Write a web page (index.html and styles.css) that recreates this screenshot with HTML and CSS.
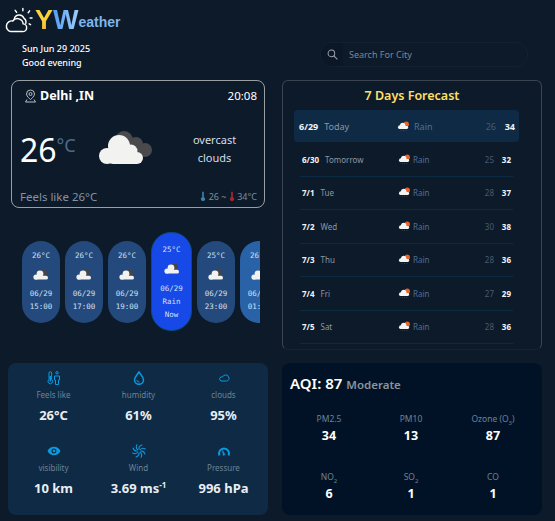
FILE: index.html
```html
<!DOCTYPE html>
<html lang="en">
<head>
  <meta charset="UTF-8">
  <title>YWeather</title>
  <link rel="stylesheet" href="styles.css">
</head>
<body>
  <svg class="defs" width="0" height="0">
    <symbol id="overcast" viewBox="0 0 56 36">
      <g fill="#4a4a4c">
        <circle cx="26" cy="10" r="9"/>
        <circle cx="38" cy="14" r="7"/>
        <circle cx="47" cy="20" r="7"/>
        <rect x="26" y="14" width="20" height="12"/>
      </g>
      <g fill="#f2f2f0">
        <circle cx="21" cy="16" r="11"/>
        <circle cx="33" cy="21" r="6.5"/>
        <circle cx="9" cy="26" r="8"/>
        <rect x="9" y="22" width="36" height="12" rx="6"/>
      </g>
    </symbol>
    <symbol id="rainy" viewBox="0 0 16 14">
      <circle cx="11.5" cy="4" r="3.4" fill="#e8622c"/>
      <g fill="#f4f4f2">
        <circle cx="7" cy="5.5" r="3.4"/>
        <circle cx="3.4" cy="7.8" r="2.4"/>
        <rect x="2" y="6.5" width="12" height="3.6" rx="1.8"/>
      </g>
      <path d="M5 11.5v1.2M8 11.5v1.2M11 11.5v1.2" stroke="#4a5866" stroke-width=".8"/>
    </symbol>
    <symbol id="hourly" viewBox="0 0 16 12">
      <circle cx="10.5" cy="4" r="3.4" fill="#454547"/>
      <g fill="#f2f2f0">
        <circle cx="7" cy="4.8" r="3.4"/>
        <circle cx="3" cy="8" r="2.6"/>
        <rect x="1" y="6.8" width="14" height="3.8" rx="1.9"/>
      </g>
    </symbol>
    <symbol id="blade" viewBox="0 0 14 14">
      <path d="M7 5.200C6.800 3.600 7.800 1.800 10 1.100" fill="none" stroke="#0a9ae0" stroke-width="1.100" stroke-linecap="round"/>
    </symbol>
  </svg>

  <header class="top">
    <div class="brand">
      <div class="logo">
        <svg class="logo-icon" viewBox="2 0 30 28" fill="none" stroke="#fff" stroke-width="1.500" stroke-linecap="round">
          <path d="M8 25.500h12a4 4 0 0 0 .8-8A6 6 0 0 0 10 14.500a5.500 5.500 0 0 0-2 11z"/>
          <path d="M11.500 13a5.200 5.200 0 0 1 10-1.500 5 5 0 0 1 2 5.500"/>
          <path d="M20.500 1.500v2.500M12.500 3.500l1.500 2M27.500 4l-1.500 2M28 11.500h2M27 17.500l1.500.8"/>
        </svg>
        <span class="logo-y">Y</span><span class="logo-w">W</span><span class="logo-rest">eather</span>
      </div>
      <p class="date">Sun Jun 29 2025</p>
      <p class="date">Good evening</p>
    </div>
    <div class="search">
      <span class="search-icon">
        <svg width="11" height="11" viewBox="0 0 12 12" fill="none" stroke="#9aa4ae" stroke-width="1.100">
          <circle cx="4.800" cy="4.800" r="3.600"/>
          <path d="M7.500 7.500l3.800 3.800"/>
        </svg>
      </span>
      <span class="search-text">Search For City</span>
    </div>
  </header>

  <main class="layout">
    <div class="left">
      <section class="now">
        <div class="now-head">
          <div class="place">
            <svg width="13" height="14" viewBox="0 0 13 14" fill="none" stroke="#b8bec4" stroke-width="1">
              <path d="M6.500 1a4 4 0 0 0-4 4c0 2.500 4 5.500 4 5.500s4-3 4-5.500a4 4 0 0 0-4-4z"/>
              <circle cx="6.500" cy="5" r="1.500"/>
              <path d="M3 10.500l-1.500 2.500h10L10 10.500"/>
            </svg>
            <span>Delhi ,IN</span>
          </div>
          <span class="clock">20:08</span>
        </div>
        <div class="now-main">
          <div class="temp">26<span class="temp-unit">°C</span></div>
          <svg class="now-cloud" viewBox="0 0 56 36"><use href="#overcast"/></svg>
          <div class="desc">overcast<br>clouds</div>
        </div>
        <div class="now-foot">
          <span class="feels">Feels like 26°C</span>
          <span class="range">
            <svg class="thermo" viewBox="0 0 6 12"><path d="M2 1h2v6.500a2.400 2.400 0 1 1-2 0z" fill="#3f7fa8"/></svg> 26 ~
            <svg class="thermo" viewBox="0 0 6 12"><path d="M2 1h2v6.500a2.400 2.400 0 1 1-2 0z" fill="#a8282c"/></svg> 34°C
          </span>
        </div>
      </section>

      <section class="hours">
        <div class="pill"><span>26°C</span><svg viewBox="0 0 16 12"><use href="#hourly"/></svg><span>06/29</span><span>15:00</span></div>
        <div class="pill"><span>26°C</span><svg viewBox="0 0 16 12"><use href="#hourly"/></svg><span>06/29</span><span>17:00</span></div>
        <div class="pill"><span>26°C</span><svg viewBox="0 0 16 12"><use href="#hourly"/></svg><span>06/29</span><span>19:00</span></div>
        <div class="pill pill-now"><span>25°C</span><svg viewBox="0 0 16 12"><use href="#hourly"/></svg><span>06/29</span><span>Rain</span><span>Now</span></div>
        <div class="pill"><span>25°C</span><svg viewBox="0 0 16 12"><use href="#hourly"/></svg><span>06/29</span><span>23:00</span></div>
        <div class="pill pill-next"><span>26°C</span><svg viewBox="0 0 16 12"><use href="#hourly"/></svg><span>06/30</span><span>01:00</span></div>
      </section>
    </div>

    <section class="week">
      <h2 class="week-title">7 Days Forecast</h2>
      <div class="day day-today">
        <span class="day-name"><b>6/29</b>Today</span>
        <svg class="day-icon" viewBox="0 0 16 14"><use href="#rainy"/></svg>
        <span class="day-rain">Rain</span><span class="low">26</span><b class="high">34</b>
      </div>
      <div class="day">
        <span class="day-name"><b>6/30</b>Tomorrow</span>
        <svg class="day-icon" viewBox="0 0 16 14"><use href="#rainy"/></svg>
        <span class="day-rain">Rain</span><span class="low">25</span><b class="high">32</b>
      </div>
      <div class="day">
        <span class="day-name"><b>7/1</b>Tue</span>
        <svg class="day-icon" viewBox="0 0 16 14"><use href="#rainy"/></svg>
        <span class="day-rain">Rain</span><span class="low">28</span><b class="high">37</b>
      </div>
      <div class="day">
        <span class="day-name"><b>7/2</b>Wed</span>
        <svg class="day-icon" viewBox="0 0 16 14"><use href="#rainy"/></svg>
        <span class="day-rain">Rain</span><span class="low">30</span><b class="high">38</b>
      </div>
      <div class="day">
        <span class="day-name"><b>7/3</b>Thu</span>
        <svg class="day-icon" viewBox="0 0 16 14"><use href="#rainy"/></svg>
        <span class="day-rain">Rain</span><span class="low">28</span><b class="high">36</b>
      </div>
      <div class="day">
        <span class="day-name"><b>7/4</b>Fri</span>
        <svg class="day-icon" viewBox="0 0 16 14"><use href="#rainy"/></svg>
        <span class="day-rain">Rain</span><span class="low">27</span><b class="high">29</b>
      </div>
      <div class="day">
        <span class="day-name"><b>7/5</b>Sat</span>
        <svg class="day-icon" viewBox="0 0 16 14"><use href="#rainy"/></svg>
        <span class="day-rain">Rain</span><span class="low">28</span><b class="high">36</b>
      </div>
    </section>

    <section class="stats">
      <div class="stat">
        <svg viewBox="0 0 14 14" fill="none" stroke="#0a9ae0" stroke-width="1">
          <path d="M2 2a1.300 1.300 0 0 1 2.600 0v6.500a2.300 2.300 0 1 1-2.600 0z"/>
          <path d="M3.300 5v5.500" stroke-width="1.400"/>
          <circle cx="10" cy="1.800" r="1.200"/>
          <path d="M7.500 5h5v4h-1v4.500h-3V9h-1z"/>
        </svg>
        <span class="stat-label">Feels like</span>
        <b class="stat-value">26°C</b>
      </div>
      <div class="stat">
        <svg viewBox="0 0 14 14" fill="none" stroke="#0a9ae0" stroke-width="1.500">
          <path d="M7 1C5 4 2.500 6 2.500 8.800a4.500 4.500 0 0 0 9 0C11.500 6 9 4 7 1z"/>
          <path d="M4.800 8.800A2.400 2.400 0 0 0 7.500 11" stroke-width="1"/>
        </svg>
        <span class="stat-label">humidity</span>
        <b class="stat-value">61%</b>
      </div>
      <div class="stat">
        <svg viewBox="0 0 14 14" fill="none" stroke="#0a9ae0" stroke-width="1">
          <path d="M4 10h5.500a2.500 2.500 0 0 0 2-4A2.500 2.500 0 0 0 8.500 4a3.200 3.200 0 0 0-3 2A2 2 0 0 0 4 10z"/>
        </svg>
        <span class="stat-label">clouds</span>
        <b class="stat-value">95%</b>
      </div>
      <div class="stat">
        <svg viewBox="0 0 14 14">
          <path fill="#0a9ae0" fill-rule="evenodd" d="M0.500 7C2 4 4.300 2.700 7 2.700S12 4 13.500 7C12 10 9.700 11.300 7 11.300S2 10 0.500 7zM7 4.500a2.500 2.500 0 1 0 0 5a2.500 2.500 0 0 0 0-5z"/>
          <circle cx="7" cy="7" r="1.300" fill="#0a9ae0"/>
        </svg>
        <span class="stat-label">visibility</span>
        <b class="stat-value">10 km</b>
      </div>
      <div class="stat">
        <svg viewBox="0 0 14 14">
          <use href="#blade"/>
          <use href="#blade" transform="rotate(45 7 7)"/>
          <use href="#blade" transform="rotate(90 7 7)"/>
          <use href="#blade" transform="rotate(135 7 7)"/>
          <use href="#blade" transform="rotate(180 7 7)"/>
          <use href="#blade" transform="rotate(225 7 7)"/>
          <use href="#blade" transform="rotate(270 7 7)"/>
          <use href="#blade" transform="rotate(315 7 7)"/>
        </svg>
        <span class="stat-label">Wind</span>
        <b class="stat-value">3.69 ms<sup>-1</sup></b>
      </div>
      <div class="stat">
        <svg viewBox="0 0 14 14" fill="none" stroke="#0a9ae0">
          <path d="M2.400 11.500A5 5 0 1 1 11.600 11.500" stroke-width="2"/>
          <path d="M6.300 11.500L5.500 6.500 8 10.500z" fill="#0a9ae0" stroke-width=".6"/>
        </svg>
        <span class="stat-label">Pressure</span>
        <b class="stat-value">996 hPa</b>
      </div>
    </section>

    <section class="aqi">
      <h2 class="aqi-title">AQI: 87 <span>Moderate</span></h2>
      <div class="aqi-grid">
        <div class="aqi-cell"><span>PM2.5</span><b>34</b></div>
        <div class="aqi-cell"><span>PM10</span><b>13</b></div>
        <div class="aqi-cell"><span>Ozone (O<sub>3</sub>)</span><b>87</b></div>
        <div class="aqi-cell"><span>NO<sub>2</sub></span><b>6</b></div>
        <div class="aqi-cell"><span>SO<sub>2</sub></span><b>1</b></div>
        <div class="aqi-cell"><span>CO</span><b>1</b></div>
      </div>
    </section>
  </main>
</body>
</html>
```

FILE: styles.css
```css
html, body {
  margin: 0;
  padding: 0;
  height: 100%;
  overflow: hidden;
  background-color: #0d1a2a;
  color: #fff;
  font-family: "Noto Sans", "Open Sans", sans-serif;
}

.defs {
  display: block;
  height: 0;
}

.top {
  display: flex;
  justify-content: space-between;
  height: 80px;
  padding: 5px 27px 0 4px;
  box-sizing: border-box;
}

.logo {
  display: flex;
  align-items: flex-end;
  height: 28px;
  padding-top: 1px;
  font-family: "Liberation Sans", sans-serif;
  font-weight: bold;
}

.logo-icon {
  width: 31px;
  height: 27px;
}

.logo-y, .logo-w {
  font-size: 27px;
  line-height: 28px;
  background-clip: text;
  -webkit-background-clip: text;
  color: transparent;
}

.logo-y {
  background-image: linear-gradient(to bottom right, #fbd63c 45%, #f29a1f);
}

.logo-w {
  background-image: linear-gradient(to right, #4f9ff5, #a4cdf9);
}

.logo-rest {
  color: #7db6ee;
  font-size: 14px;
  line-height: 24px;
}

.date {
  margin: 0 0 0 18px;
  font-size: 9px;
  font-weight: 500;
  line-height: 14px;
  position: relative;
  top: 8px;
}

.search {
  display: flex;
  align-items: center;
  width: 208px;
  height: 25px;
  margin-top: 37px;
  box-sizing: border-box;
  border: 1px solid #122032;
  border-radius: 12px;
  font-size: 9px;
  color: #7c8894;
}

.search-icon {
  display: flex;
  align-items: center;
  justify-content: center;
  width: 22px;
  height: 100%;
  margin-right: 6px;
  border-radius: 12px 0 0 12px;
  background-color: #0b1626;
}

.layout {
  display: grid;
  grid-template-columns: 260px 260px;
  grid-template-rows: 283px 152px;
  column-gap: 14px;
  padding-left: 8px;
}

.now {
  display: flex;
  flex-direction: column;
  justify-content: space-between;
  width: 254px;
  height: 128px;
  margin-left: 3px;
  padding: 6px 7px 3px 8px;
  box-sizing: border-box;
  border: 1px solid #9a9fa4;
  border-radius: 8px;
}

.now-head {
  display: flex;
  justify-content: space-between;
  align-items: center;
}

.place {
  display: flex;
  align-items: center;
  gap: 3px;
  padding-left: 4px;
  font-size: 12.500px;
  font-weight: 700;
}

.clock {
  font-size: 11.500px;
}

.now-main {
  display: flex;
  align-items: center;
  padding-top: 2px;
}

.temp {
  width: 78px;
  font-size: 32px;
  line-height: 40px;
}

.temp-unit {
  font-size: 18px;
  color: #4d6a8c;
  vertical-align: 10px;
}

.now-cloud {
  width: 56px;
  height: 36px;
  margin-top: 1px;
}

.desc {
  flex: 1;
  margin-top: 2px;
  padding-left: 18px;
  text-align: center;
  font-size: 11px;
  line-height: 18px;
  color: #d5dde5;
}

.now-foot {
  display: flex;
  justify-content: space-between;
  align-items: center;
}

.feels {
  font-size: 11.500px;
  color: #8592a0;
}

.range {
  font-size: 9px;
  color: #7e8c9a;
}

.thermo {
  width: 6px;
  height: 10px;
  vertical-align: -1px;
}

.hours {
  display: flex;
  align-items: center;
  gap: 5px;
  width: 238px;
  height: 99px;
  margin: 24px 0 0 14px;
  overflow: hidden;
}

.pill {
  flex: none;
  display: flex;
  flex-direction: column;
  align-items: center;
  width: 38px;
  height: 82px;
  padding-top: 9px;
  box-sizing: border-box;
  border-radius: 19px;
  background-color: #24497c;
  color: #cfe0f5;
  font-family: "DejaVu Sans Mono", monospace;
  font-size: 7.500px;
  line-height: 12.500px;
}

.pill svg {
  width: 16px;
  height: 12px;
  margin: 7px 0;
}

.pill-now {
  width: 41px;
  height: 99px;
  padding-top: 10px;
  border: 1px solid #0e4a78;
  border-radius: 20px;
  background-color: #1649e8;
  line-height: 13px;
}

.pill-next {
  background-color: #2a62a8;
}

.week {
  height: 270px;
  padding: 0 11px;
  box-sizing: border-box;
  border: 1px solid #3a4450;
  border-bottom-color: #18232f;
  border-radius: 6px;
}

.week-title {
  margin: 5px 0 5px;
  text-align: center;
  font-size: 12.500px;
  font-weight: 600;
  line-height: 19px;
  color: #ffe066;
}

.day {
  display: grid;
  grid-template-columns: 96px 15px 1fr 20px 17px;
  align-items: center;
  width: 213px;
  height: 33.500px;
  margin-left: 6px;
  padding: 0 2px;
  box-sizing: border-box;
  border-bottom: 1px solid #0c2a40;
  font-size: 8px;
}

.day-today {
  grid-template-columns: 98px 17px 1fr 22px 19px;
  width: 225px;
  height: 32px;
  margin: 0 0 1px;
  padding: 0 4px 0 5px;
  border: 0;
  border-radius: 4px;
  background-color: #0f2a44;
  font-size: 9px;
}

.day-name {
  color: #8b97a3;
}

.day-name b {
  margin-right: 6px;
  color: #f2f5f8;
}

.day-icon {
  width: 13px;
  height: 11px;
}

.day-rain {
  color: #4f6f96;
}

.low {
  text-align: right;
  color: #4a5a6c;
}

.high {
  text-align: right;
  color: #f2f5f8;
}

.stats {
  display: grid;
  grid-template-columns: repeat(3, 85px);
  grid-template-rows: 73px 73px;
  height: 152px;
  padding: 0 3px;
  box-sizing: border-box;
  border-radius: 8px;
  background-color: #0f2a44;
}

.stat {
  display: flex;
  flex-direction: column;
  align-items: center;
  padding-top: 8px;
}

.stat svg {
  width: 14px;
  height: 14px;
}

.stat-label {
  margin-top: 3px;
  font-size: 8px;
  line-height: 14px;
  color: #6d8296;
}

.stat-value {
  margin-top: 4px;
  font-size: 13px;
  line-height: 18px;
  color: #e8eef5;
}

.stat-value sup {
  font-size: 8px;
  line-height: 0;
}

.aqi {
  height: 152px;
  padding: 10px 6px 0;
  box-sizing: border-box;
  border-radius: 8px;
  background-color: #021226;
}

.aqi-title {
  margin: 0 0 0 2px;
  font-size: 15px;
  font-weight: 600;
  line-height: 20px;
}

.aqi-title span {
  font-size: 11.500px;
  color: #8a949e;
}

.aqi-grid {
  display: grid;
  grid-template-columns: repeat(3, 82px);
  grid-template-rows: 58px 58px;
  margin-top: 4px;
}

.aqi-cell {
  display: flex;
  flex-direction: column;
  align-items: center;
  justify-content: center;
  font-size: 8.500px;
  line-height: 14px;
  color: #6d8296;
}

.aqi-cell sub {
  font-size: 6px;
  line-height: 0;
}

.aqi-cell b {
  margin-top: 1px;
  font-size: 12.500px;
  line-height: 17px;
  color: #fff;
}
```
